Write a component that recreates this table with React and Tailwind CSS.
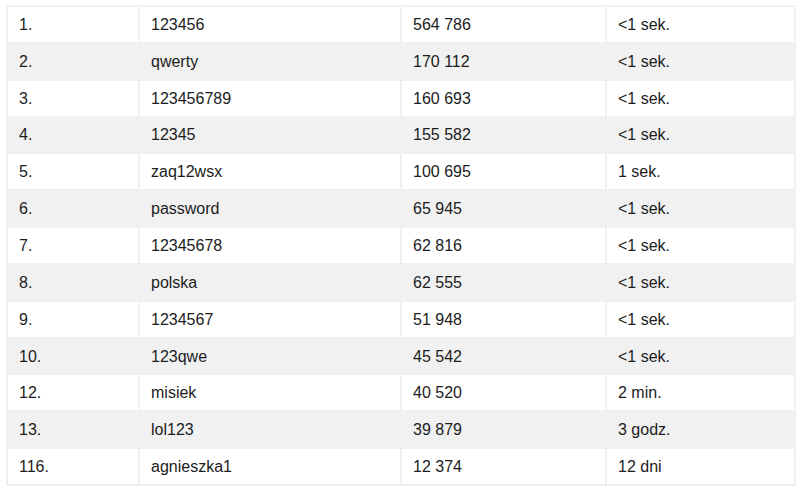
import React from "react";

const rows = [
  ["1.", "123456", "564 786", "<1 sek."],
  ["2.", "qwerty", "170 112", "<1 sek."],
  ["3.", "123456789", "160 693", "<1 sek."],
  ["4.", "12345", "155 582", "<1 sek."],
  ["5.", "zaq12wsx", "100 695", "1 sek."],
  ["6.", "password", "65 945", "<1 sek."],
  ["7.", "12345678", "62 816", "<1 sek."],
  ["8.", "polska", "62 555", "<1 sek."],
  ["9.", "1234567", "51 948", "<1 sek."],
  ["10.", "123qwe", "45 542", "<1 sek."],
  ["12.", "misiek", "40 520", "2 min."],
  ["13.", "lol123", "39 879", "3 godz."],
  ["116.", "agnieszka1", "12 374", "12 dni"],
];

const App = () => {
  return (
    <div className="bg-white w-[800px] h-[492px] pt-[5px] pl-[6px] font-['Liberation_Sans',Arial,sans-serif] text-[16px] text-[#1c1c1c]">
      <table className="border-collapse border-2 border-[#f0f0f0] w-[788px] table-fixed">
        <colgroup>
          <col className="w-[132px]" />
          <col className="w-[262px]" />
          <col className="w-[205px]" />
          <col className="w-[189px]" />
        </colgroup>
        <tbody>
          {rows.map((row, i) => (
            <tr key={i} className={i % 2 === 1 ? "bg-[#f1f1f1]" : "bg-white"}>
              {row.map((cell, j) => (
                <td
                  key={j}
                  className="border-2 border-[#f0f0f0] h-[36.85px] pt-[1px] pb-0 pl-[11px] leading-none"
                >
                  {cell}
                </td>
              ))}
            </tr>
          ))}
        </tbody>
      </table>
    </div>
  );
};

export default App;
